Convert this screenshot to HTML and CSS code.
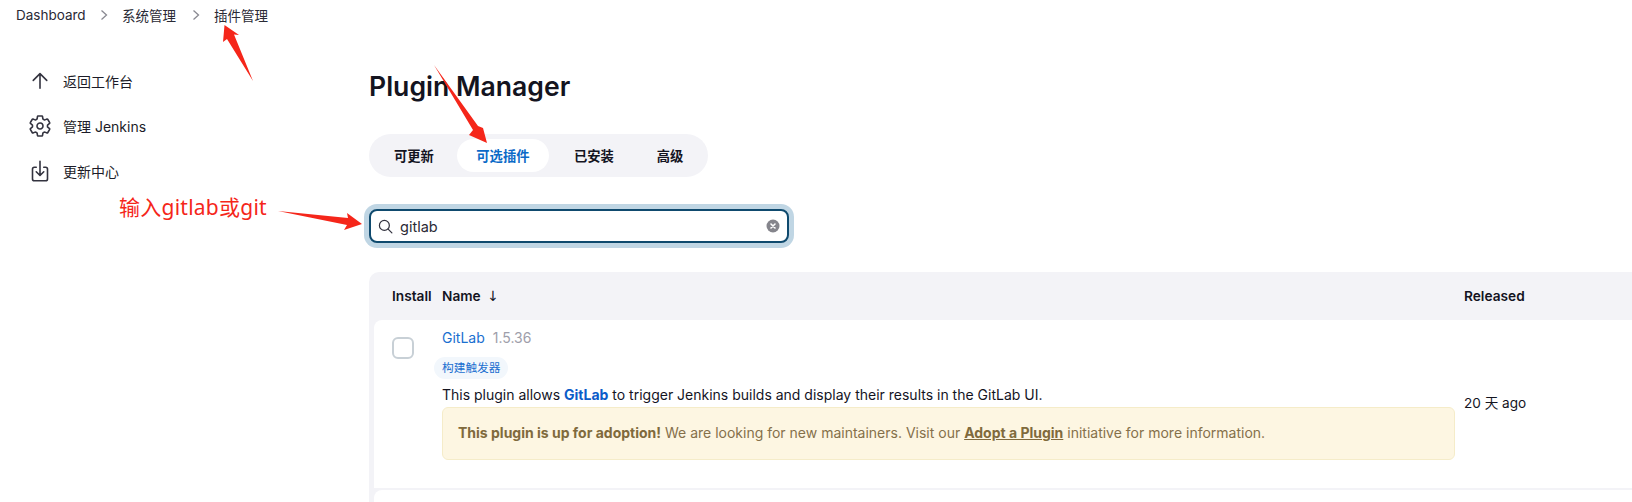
FILE: index.html
```html
<!DOCTYPE html>
<html lang="zh">
<head>
<meta charset="utf-8">
<title>Plugin Manager</title>
<link rel="stylesheet" href="styles.css">
</head>
<body>
<nav class="crumbs">
  <a class="crumb crumb-first">Dashboard</a>
  <svg class="chev" viewBox="0 0 8 12"><path d="M1.5 1.5 6.500 6l-5 4.500"/></svg>
  <a class="crumb">系统管理</a>
  <svg class="chev" viewBox="0 0 8 12"><path d="M1.5 1.5 6.500 6l-5 4.500"/></svg>
  <a class="crumb">插件管理</a>
</nav>
<div class="page">
  <aside class="side">
    <a class="side-item">
      <svg class="side-icon" viewBox="0 0 512 512"><path d="M112 244l144-144 144 144M256 120v292"/></svg>
      <span>返回工作台</span>
    </a>
    <a class="side-item">
      <svg class="side-icon" viewBox="0 0 512 512"><path d="M262.29 192.31a64 64 0 1057.4 57.4 64.13 64.13 0 00-57.4-57.4zM416.39 256a154.34 154.34 0 01-1.53 20.79l45.21 35.46a10.81 10.81 0 012.45 13.75l-42.77 74a10.81 10.81 0 01-13.14 4.59l-44.9-18.08a16.11 16.11 0 00-15.17 1.75A164.48 164.48 0 01325 400.8a15.94 15.94 0 00-8.82 12.14l-6.73 47.89a11.08 11.08 0 01-10.68 9.17h-85.54a11.11 11.11 0 01-10.69-8.87l-6.72-47.82a16.07 16.07 0 00-9-12.22 155.3 155.3 0 01-21.46-12.57 16 16 0 00-15.11-1.71l-44.89 18.07a10.81 10.81 0 01-13.14-4.58l-42.77-74a10.8 10.8 0 012.45-13.75l38.21-30a16.05 16.05 0 006-14.08c-.36-4.17-.58-8.33-.58-12.5s.21-8.27.58-12.35a16 16 0 00-6.07-13.94l-38.19-30A10.81 10.81 0 0149.48 186l42.77-74a10.81 10.81 0 0113.14-4.59l44.9 18.08a16.11 16.11 0 0015.17-1.75A164.48 164.48 0 01187 111.2a15.94 15.94 0 008.82-12.14l6.73-47.89A11.08 11.08 0 01213.23 42h85.54a11.11 11.11 0 0110.69 8.87l6.72 47.82a16.07 16.07 0 009 12.22 155.3 155.3 0 0121.46 12.57 16 16 0 0015.11 1.71l44.89-18.07a10.81 10.81 0 0113.14 4.58l42.77 74a10.8 10.8 0 01-2.45 13.75l-38.21 30a16.05 16.05 0 00-6.05 14.08c.33 4.14.55 8.3.55 12.47z"/></svg>
      <span>管理 Jenkins</span>
    </a>
    <a class="side-item">
      <svg class="side-icon" viewBox="0 0 512 512"><path d="M336 176h40a40 40 0 0140 40v208a40 40 0 01-40 40H136a40 40 0 01-40-40V216a40 40 0 0140-40h40M176 272l80 80 80-80M256 48v288"/></svg>
      <span>更新中心</span>
    </a>
  </aside>
  <main class="main">
    <h1 class="title">Plugin Manager</h1>
    <div class="tabs">
      <a class="tab">可更新</a>
      <a class="tab tab-active">可选插件</a>
      <a class="tab">已安装</a>
      <a class="tab">高级</a>
    </div>
    <div class="search">
      <svg class="search-icon" viewBox="0 0 16 16"><circle cx="6.800" cy="6.800" r="5.300"/><path d="m10.800 10.800 4 4"/></svg>
      <span class="search-text">gitlab</span>
      <svg class="search-clear" viewBox="0 0 14 14"><circle cx="7" cy="7" r="6.500"/><path d="m5 5 4 4M9 5 5 9"/></svg>
    </div>
    <section class="table">
      <div class="thead">
        <span class="th-install">Install</span>
        <span class="th-name">Name <span class="sort">↓</span></span>
        <span class="th-released">Released</span>
      </div>
      <div class="row">
        <div class="cell-check"><span class="checkbox"></span></div>
        <div class="cell-name">
          <div class="plugin-head"><a class="plugin-link">GitLab</a><span class="version">1.5.36</span></div>
          <span class="tag">构建触发器</span>
          <p class="desc">This plugin allows <strong class="hl">GitLab</strong> to trigger Jenkins builds and display their results in the GitLab UI.</p>
          <div class="alert"><strong>This plugin is up for adoption!</strong> We are looking for new maintainers. Visit our <a class="alert-link">Adopt a Plugin</a> initiative for more information.</div>
        </div>
        <div class="cell-released">20 天 ago</div>
      </div>
      <div class="row row-next"></div>
    </section>
  </main>
</div>
<svg class="marks" viewBox="0 0 1632 502">
  <polygon points="224.500,25 239,35 234,34.500 253,81 227,39 223,42"/>
  <polygon points="434,65 478,126 483,128 487,143 469,135 473,130"/>
  <polygon points="278,211 348,218 347,213 362,224 344,230 347,225"/>
</svg>
<div class="note">输入gitlab或git</div>
</body>
</html>
```
FILE: styles.css
```css
* { box-sizing: border-box; }
html, body { margin: 0; height: 502px; overflow: hidden; background: #fff; }
body {
  position: relative;
  font-family: Inter, "Noto Sans CJK SC", sans-serif;
  font-size: 14px;
  color: #14141f;
}
.crumbs { display: flex; align-items: center; height: 29px; padding-left: 16px; }
.crumb { font-size: 13.500px; color: #2a2a35; }
.crumb-first { width: 68px; }
.chev { width: 8px; height: 12px; margin: 0 14px 0 16px; fill: none; stroke: #8a8a92; stroke-width: 1.300; }
.page { display: flex; }
.side { width: 369px; padding: 29px 0 0 28px; flex: none; }
.side-item { display: flex; align-items: center; gap: 11px; height: 45px; font-size: 14px; color: #1c1c28; }
.side-icon { width: 24px; height: 24px; fill: none; stroke: #33333f; stroke-width: 34; stroke-linecap: round; stroke-linejoin: round; flex: none; }
.main { flex: 1; min-width: 0; }
.title { margin: 0; padding-top: 39px; font-size: 26.600px; line-height: 36px; font-weight: 600; color: #14141f; }
.tabs { display: inline-flex; align-items: center; gap: 3px; height: 43px; margin-top: 30px; padding: 0 5px; background: #f3f3f7; border-radius: 22px; vertical-align: top; }
.tab { display: flex; align-items: center; justify-content: center; height: 33px; padding: 0 20px 1px; font-size: 13.300px; font-weight: 600; color: #14141f; border-radius: 17px; }
.tab-active { width: 92px; padding: 0 0 1px; margin-right: 2px; background: #fff; color: #0b6ac7; }
.search { display: flex; align-items: center; width: 420px; height: 34px; margin-top: 32px; padding: 0 7px 0 7px; background: #fff; border: 2px solid #0f4a6e; border-radius: 8px; box-shadow: 0 0 0 5px #c0d6e4; }
.search-icon { width: 15px; height: 15px; fill: none; stroke: #33333f; stroke-width: 1.300; stroke-linecap: round; flex: none; }
.search-text { flex: 1; margin-left: 7px; font-size: 14.500px; color: #2a2a35; }
.search-clear { width: 14px; height: 14px; flex: none; }
.search-clear circle { fill: #85858c; }
.search-clear path { stroke: #fff; stroke-width: 1.600; stroke-linecap: round; }
.table { margin-top: 29px; padding: 0 0 0 5px; background: #f3f3f7; border-top-left-radius: 10px; height: 230px; overflow: hidden; }
.thead { display: flex; align-items: center; height: 48px; font-size: 13.700px; font-weight: 600; color: #14141f; }
.th-install { width: 68px; padding-left: 18px; }
.th-name { flex: 1; }
.sort { font-family: "DejaVu Sans", sans-serif; font-weight: 400; font-size: 14px; margin-left: 3px; }
.th-released { width: 168px; }
.row { display: flex; align-items: center; height: 168px; background: #fff; border-top-left-radius: 8px; }
.row-next { height: 12px; margin-top: 2px; }
.cell-check { width: 68px; align-self: flex-start; padding: 17px 0 0 18px; }
.checkbox { display: block; width: 22px; height: 22px; border: 2px solid #c8d0d6; border-radius: 6px; }
.cell-name { flex: 1; align-self: flex-start; padding-top: 7px; }
.plugin-head { display: flex; gap: 8px; line-height: 22px; font-size: 14px; }
.plugin-link { color: #1a6fd0; }
.version { color: #9e9eaa; }
.tag { display: block; width: 74px; margin: 8px 0 0 -8px; height: 22px; line-height: 22px; padding-left: 8px; font-size: 11.700px; color: #1a6fd0; background: #f2f7fc; border-radius: 11px; white-space: nowrap; }
.desc { margin: 5px 0 1px; line-height: 22px; font-size: 14px; color: #14141f; }
.hl { color: #0b5cc9; font-weight: 700; }
.alert { width: 1013px; height: 53px; line-height: 49px; padding: 0 15px; white-space: nowrap; background: #fdf6e2; border: 1px solid #f5ecc9; border-radius: 6px; font-size: 14px; color: #85704a; }
.alert strong { font-weight: 700; color: #806a3c; }
.alert-link { font-weight: 700; color: #806a3c; text-decoration: underline; }
.cell-released { width: 168px; font-size: 13.600px; color: #14141f; margin-top: -5px; }
.marks { position: absolute; left: 0; top: 0; width: 1632px; height: 502px; pointer-events: none; }
.marks polygon { fill: #f5261a; }
.note { position: absolute; left: 119px; top: 193px; font-family: "Noto Sans", "Noto Sans CJK SC", sans-serif; font-size: 21px; letter-spacing: .25px; line-height: 28px; color: #f5261a; }
```
